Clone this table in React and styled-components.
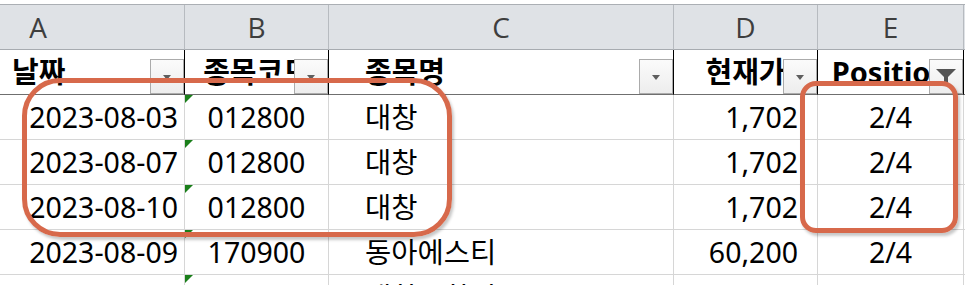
import React from "react";
import styled, {createGlobalStyle, css} from "styled-components";

const GlobalStyle = createGlobalStyle`
  html, body {
    margin: 0;
    padding: 0;
    background: #ffffff;
    overflow: hidden;
  }
  body {
    font-family: "Noto Sans", "Noto Sans CJK KR", sans-serif;
  }
`;

// column A starts off-screen, so the sheet is pulled left
const COLS = "293px 144px 345px 144px 146px 140px";

const columns = ["A", "B", "C", "D", "E", ""];

const headers = [
    {text: "날짜", align: "left", pad: 120},
    {text: "종목코드", align: "center"},
    {text: "종목명", align: "left", pad: 36},
    {text: "현재가", align: "center"},
    {text: "Position", align: "center", filtered: true},
];

const rows = [
    ["2023-08-03", "012800", "대창", "1,702", "2/4"],
    ["2023-08-07", "012800", "대창", "1,702", "2/4"],
    ["2023-08-10", "012800", "대창", "1,702", "2/4"],
    ["2023-08-09", "170900", "동아에스티", "60,200", "2/4"],
    ["", "", "대한유화티", "", ""],
];

const dataAlign = [
    {align: "right", pad: 6},
    {align: "center"},
    {align: "left", pad: 36},
    {align: "right", pad: 19},
    {align: "center"},
];

const Page = styled.div`
    position: relative;
    width: 965px;
    height: 285px;
    overflow: hidden;
    padding-top: 4px;
    box-sizing: border-box;
`;

const Sheet = styled.div`
    margin-left: -108px;
    display: flex;
    flex-direction: column;
`;

const Row = styled.div`
    display: grid;
    grid-template-columns: ${COLS};
    ${(props) => props.$letters && css`
        border-top: 1px solid #abafb4;
    `}
`;

const LetterCell = styled.div`
    box-sizing: border-box;
    height: 45px;
    background: #dfe2e6;
    border-right: 1px solid #b7bbc0;
    border-bottom: 1px solid #a7abb0;
    font-family: "Open Sans", "Noto Sans", sans-serif;
    font-size: 28px;
    color: #3e3e3e;
    line-height: 44px;
    text-align: center;
`;

const alignCss = css`
    text-align: ${(props) => props.$align};
    ${(props) => props.$align === "left" && `padding-left: ${props.$pad || 0}px;`}
    ${(props) => props.$align !== "left" && `padding-right: ${props.$pad || 0}px;`}
`;

const HeadCell = styled.div`
    position: relative;
    box-sizing: border-box;
    height: 45px;
    background: #ffffff;
    border-right: 1px solid ${(props) => (props.$edge ? "#d6d6d6" : "#000000")};
    border-bottom: 1px solid #6f6f6f;
    font-size: 29px;
    font-weight: 700;
    color: #000;
    line-height: 44px;
    white-space: nowrap;
    overflow: hidden;
    ${alignCss}
`;

const FilterButton = styled.div`
    position: absolute;
    right: 0;
    bottom: 0;
    width: 34px;
    height: 35px;
    box-sizing: border-box;
    border: 1px solid #ababab;
    background: linear-gradient(#fbfbfb, #ededed);
    display: flex;
    align-items: center;
    justify-content: center;
`;

const Arrow = styled.span`
    width: 0;
    height: 0;
    border-left: 4px solid transparent;
    border-right: 4px solid transparent;
    border-top: 5px solid #5e5e5e;
    margin-top: 1px;
`;

const Cell = styled.div`
    position: relative;
    box-sizing: border-box;
    height: 45px;
    border-right: 1px solid #d6d6d6;
    border-bottom: 1px solid #d6d6d6;
    font-size: 28.5px;
    color: #000;
    line-height: 44px;
    white-space: nowrap;
    overflow: hidden;
    ${alignCss}

    ${(props) => props.$flag && css`
        &::before {
            content: "";
            position: absolute;
            left: 0;
            top: 0;
            width: 0;
            height: 0;
            border-top: 8px solid #1a7f1a;
            border-right: 8px solid transparent;
        }
    `}
`;

const Callout = styled.div`
    position: absolute;
    left: ${(props) => props.$left}px;
    top: ${(props) => props.$top}px;
    width: ${(props) => props.$w}px;
    height: ${(props) => props.$h}px;
    box-sizing: border-box;
    border: 5px solid #d7694b;
    border-radius: ${(props) => props.$radius}px;
    box-shadow: 2px 3px 3px rgba(0, 0, 0, 0.22);
    pointer-events: none;
`;

const Funnel = () => (
    <svg width="22" height="18" viewBox="0 0 22 18">
        <path d="M1 1 H21 L13 9 V17 L9 14.5 V9 Z" fill="#555555" />
    </svg>
);

const App = () => {
    return (
        <Page>
            <GlobalStyle />
            <Sheet>
                <Row $letters>
                    {columns.map((c, i) => (
                        <LetterCell key={i}>{c}</LetterCell>
                    ))}
                </Row>
                <Row>
                    {headers.map((h) => (
                        <HeadCell key={h.text} $align={h.align} $pad={h.pad}>
                            {h.text}
                            <FilterButton>{h.filtered ? <Funnel /> : <Arrow />}</FilterButton>
                        </HeadCell>
                    ))}
                    <HeadCell $edge $align="left" />
                </Row>
                {rows.map((r, ri) => (
                    <Row key={ri}>
                        {r.map((v, ci) => (
                            <Cell key={ci} $align={dataAlign[ci].align} $pad={dataAlign[ci].pad} $flag={ci === 1}>
                                {v}
                            </Cell>
                        ))}
                        <Cell $align="left" />
                    </Row>
                ))}
            </Sheet>
            <Callout $left={22} $top={78} $w={430} $h={159} $radius={38} />
            <Callout $left={800} $top={81} $w={158} $h={152} $radius={16} />
        </Page>
    );
};

export default App;
